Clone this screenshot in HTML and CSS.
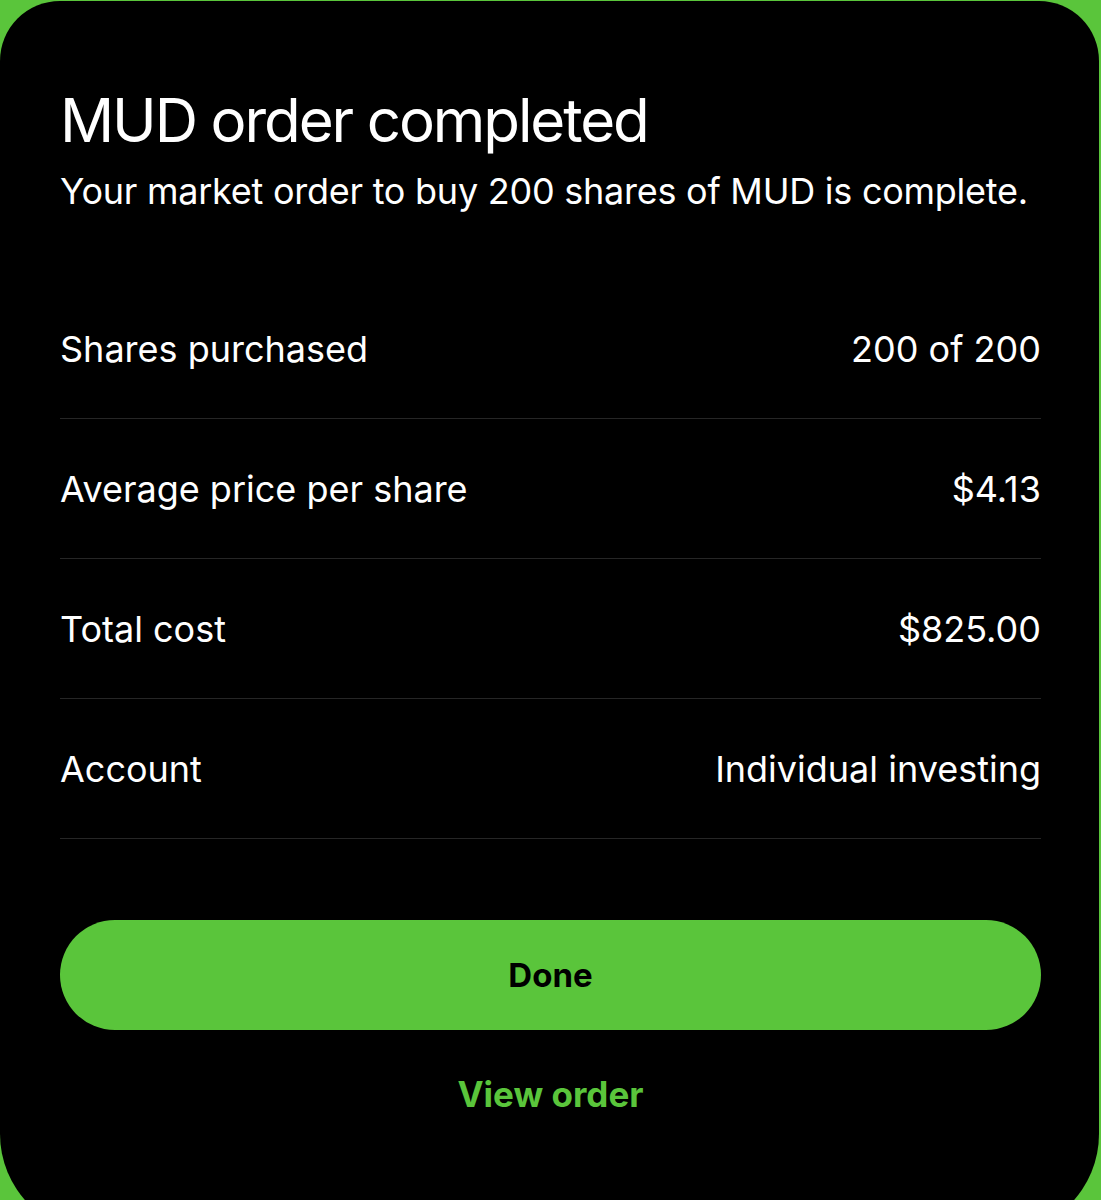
FILE: index.html
```html
<!DOCTYPE html>
<html lang="en">
<head>
<meta charset="utf-8">
<title>MUD order completed</title>
<link rel="stylesheet" href="styles.css">
</head>
<body>
<div class="card">
  <h1 class="title">MUD order completed</h1>
  <p class="subtitle">Your market order to buy 200 shares of MUD is complete.</p>
  <div class="rows">
    <div class="row"><span>Shares purchased</span><span>200 of 200</span></div>
    <div class="row"><span>Average price per share</span><span>$4.13</span></div>
    <div class="row"><span>Total cost</span><span>$825.00</span></div>
    <div class="row"><span>Account</span><span>Individual investing</span></div>
  </div>
  <button class="done">Done</button>
  <div class="view">View order</div>
</div>
</body>
</html>
```

FILE: styles.css
```css
html, body {
  margin: 0;
  padding: 0;
  background: #5ac53b;
  overflow: hidden;
  height: 1200px;
}
.card {
  box-sizing: border-box;
  width: 1099px;
  height: 1233px;
  margin-top: 1px;
  background: #000;
  border-radius: 60px 60px 100px 100px;
  padding: 83px 58px 0 60px;
  font-family: Inter, "Noto Sans", sans-serif;
  color: #fff;
  display: flex;
  flex-direction: column;
}
.title {
  margin: 0;
  font-size: 60px;
  line-height: 73px;
  font-weight: 400;
  letter-spacing: -2.1px;
}
.subtitle {
  margin: 12px 0 0;
  font-size: 36px;
  line-height: 44px;
  font-weight: 400;
  letter-spacing: -0.25px;
  white-space: nowrap;
}
.rows {
  margin-top: 66px;
  display: flex;
  flex-direction: column;
}
.row {
  height: 139px;
  border-bottom: 1px solid #262626;
  display: flex;
  justify-content: space-between;
  align-items: center;
  font-size: 36px;
  line-height: 44px;
}
.done {
  margin-top: 81px;
  height: 110px;
  width: 100%;
  border: none;
  border-radius: 55px;
  background: #5ac53b;
  color: #000;
  font-family: Inter, "Noto Sans", sans-serif;
  font-weight: 700;
  font-size: 33px;
  line-height: 110px;
  padding: 0;
}
.view {
  margin-top: 43px;
  text-align: center;
  color: #5ac53b;
  font-weight: 700;
  font-size: 35px;
  line-height: 43px;
}
```
